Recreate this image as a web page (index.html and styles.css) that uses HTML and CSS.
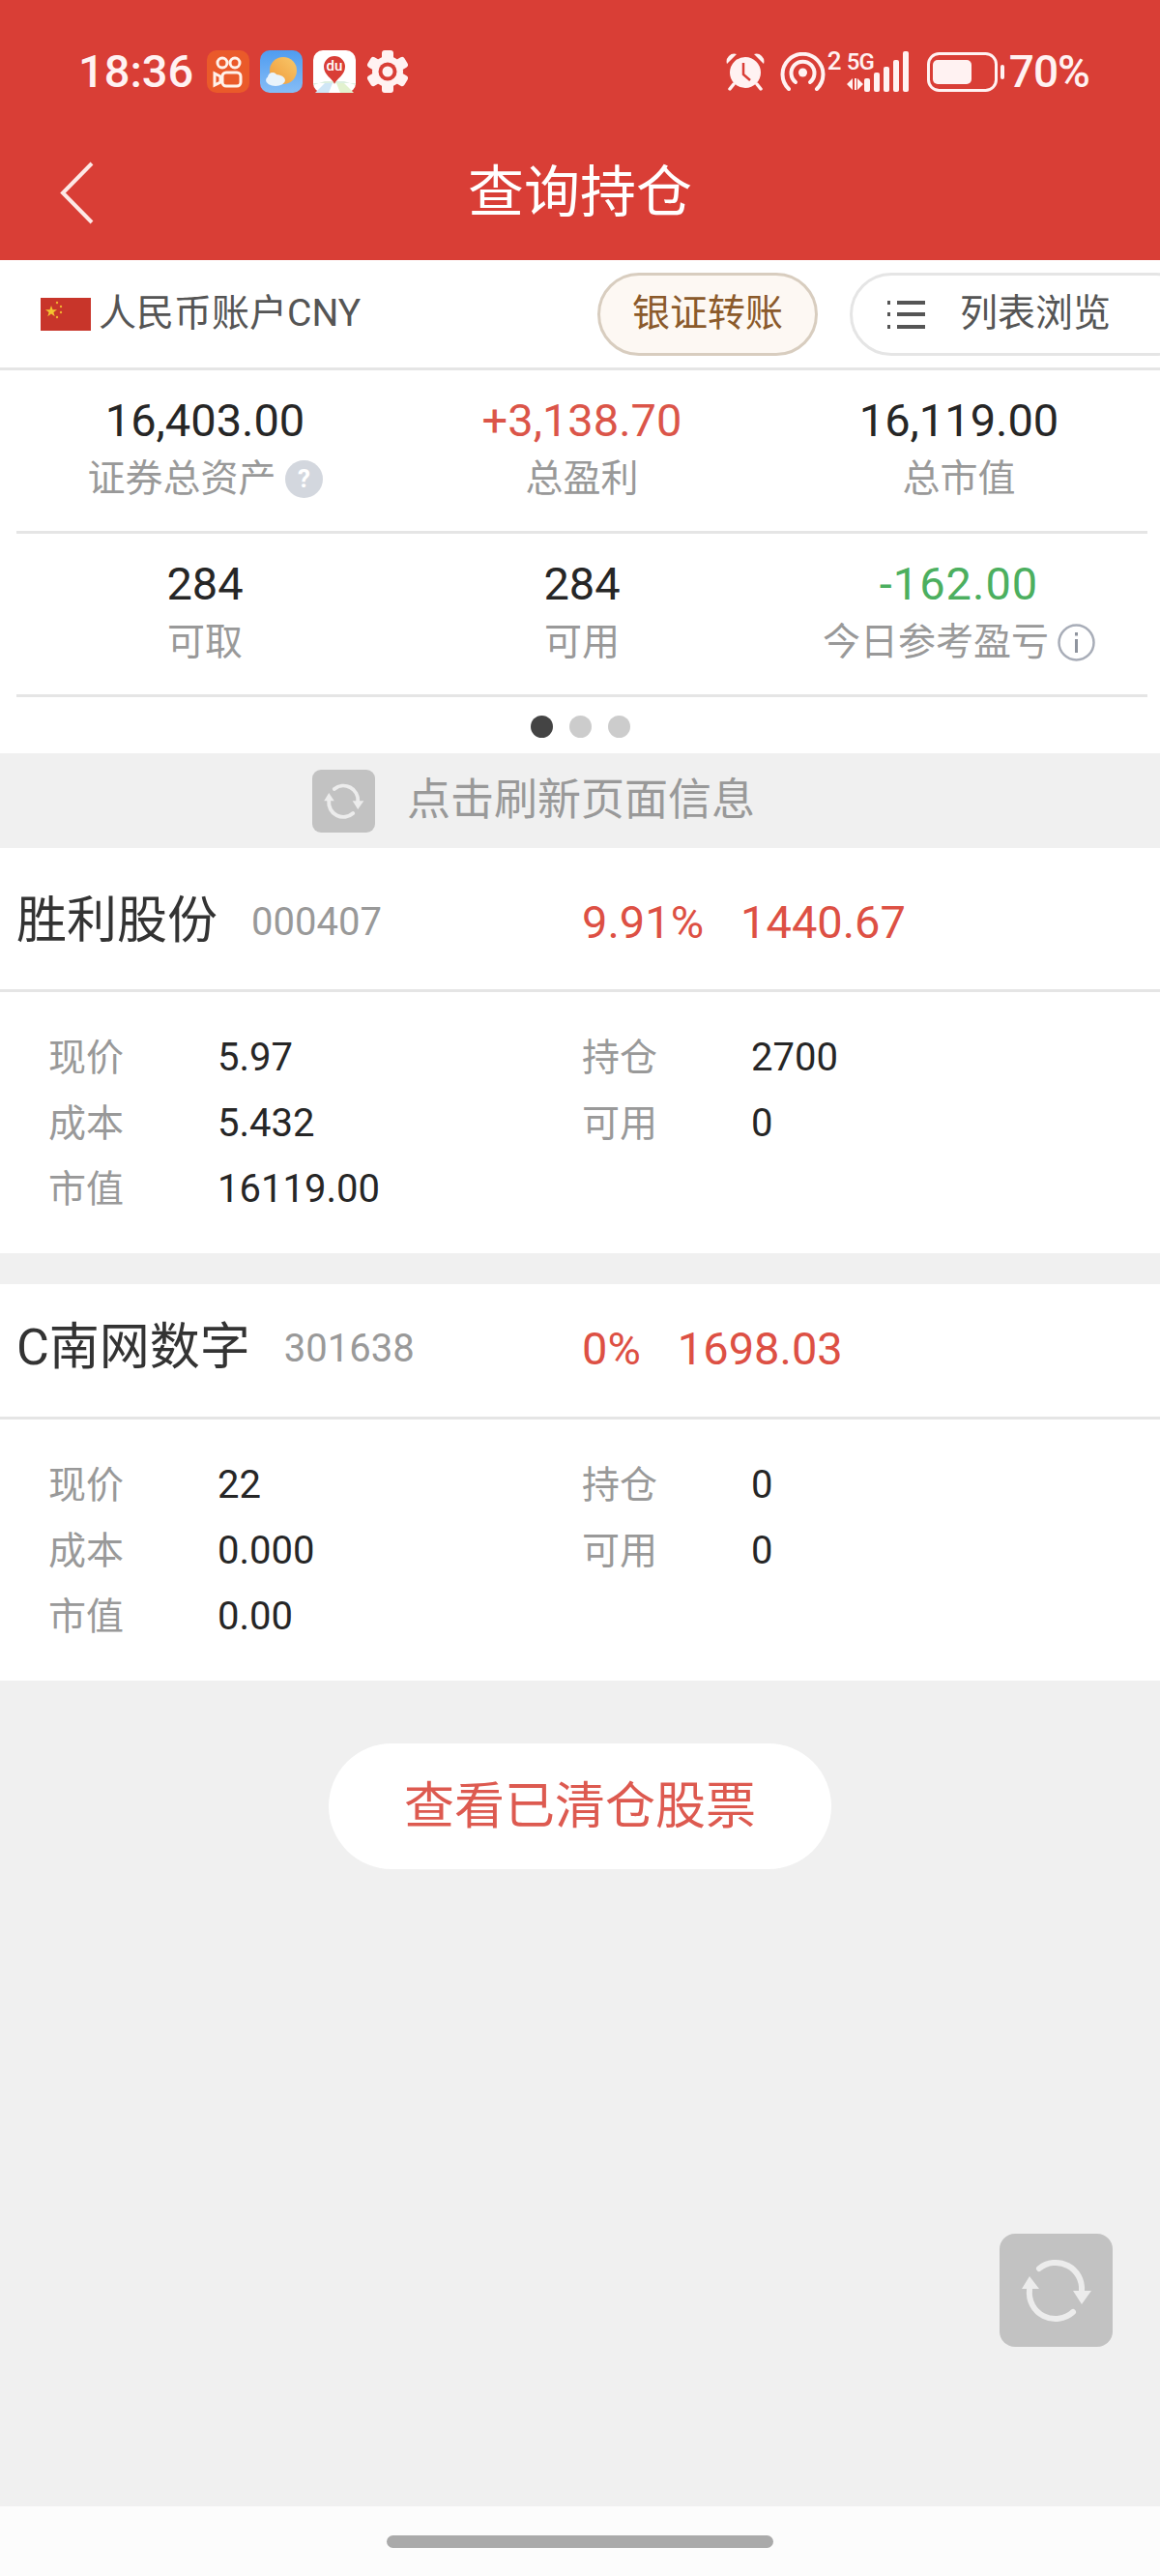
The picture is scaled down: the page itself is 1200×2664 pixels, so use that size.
FILE: index.html
```html
<!DOCTYPE html>
<html lang="zh-CN">
<head>
<meta charset="utf-8">
<title>查询持仓</title>
<link rel="stylesheet" href="styles.css">
</head>
<body>
<div class="page">
  <header class="header">
    <div class="status">
      <span class="time">18:36</span>
      <svg class="app" viewBox="0 0 44 44"><rect width="44" height="44" rx="10" fill="#ea5a2a"/><g fill="none" stroke="#fff2ea" stroke-width="3"><circle cx="16" cy="13" r="5"/><circle cx="29" cy="13" r="5"/><rect x="16" y="23" width="19" height="14" rx="4"/><path d="M14 27l-6-3v12l6-3z"/></g></svg>
      <svg class="app" viewBox="0 0 44 44"><defs><linearGradient id="sky" x1="0" y1="0" x2="0" y2="1"><stop offset="0" stop-color="#4f9cf0"/><stop offset="1" stop-color="#86bdf6"/></linearGradient><linearGradient id="sun" x1="1" y1="0" x2="0" y2="1"><stop offset="0" stop-color="#f8c86a"/><stop offset="1" stop-color="#f09a3a"/></linearGradient></defs><rect width="44" height="44" rx="10" fill="url(#sky)"/><circle cx="24" cy="21" r="14" fill="url(#sun)"/><ellipse cx="16" cy="31" rx="10" ry="6" fill="#e9f3fb"/><circle cx="13" cy="28" r="5" fill="#e9f3fb"/></svg>
      <svg class="app" viewBox="0 0 44 44"><rect width="44" height="44" rx="10" fill="#fff"/><path d="M0 36l12-4h20l12 4v-2H0z" fill="#dcefe0"/><path d="M2 44l10-10h8l-4 10z" fill="#cfe6f6"/><path d="M24 34h8l10 10H28z" fill="#e2f2cf"/><path d="M22 35c-2-6-11-9-11-18a11 11 0 0 1 22 0c0 9-9 12-11 18z" fill="#d93e36"/><text x="22" y="21" class="du">du</text></svg>
      <svg class="app" viewBox="0 0 44 44"><g fill="#fff2f2"><circle cx="22" cy="22" r="16"/><rect x="16" y="0" width="12" height="44" rx="3"/><rect x="16" y="0" width="12" height="44" rx="3" transform="rotate(60 22 22)"/><rect x="16" y="0" width="12" height="44" rx="3" transform="rotate(120 22 22)"/></g><circle cx="22" cy="22" r="9.5" fill="#d93e36"/><circle cx="22" cy="22" r="5.5" fill="#fff2f2"/></svg>
      <div class="status-right">
        <svg class="alarm" viewBox="0 0 40 40"><g fill="#fff2f2"><circle cx="20" cy="21" r="16"/><path d="M1 12a8 8 0 0 1 10-10z"/><path d="M39 12a8 8 0 0 0-10-10z"/></g><path d="M8 33l-4 5M32 33l4 5" stroke="#fff2f2" stroke-width="3.500" stroke-linecap="round"/><path d="M18 11v12l7 6" fill="none" stroke="#d93e36" stroke-width="2.500"/></svg>
        <svg class="hotspot" viewBox="0 0 47 40"><g fill="none" stroke="#fff2f2" stroke-width="4" stroke-linecap="round"><path d="M9 38a21 21 0 1 1 29 0"/><path d="M16 31a12 12 0 1 1 15 0"/></g><circle cx="23.500" cy="21" r="4.500" fill="#fff2f2"/></svg>
        <span class="sim">2</span>
        <div class="net">
          <span class="fiveg">5G</span>
          <svg class="arrows" viewBox="0 0 18 14"><path d="M0 7l6-6v12zM8 1h2v12H8zM11 1l6 6-6 6z" fill="#fff2f2"/></svg>
        </div>
        <svg class="bars" viewBox="0 0 48 42"><g fill="#fff2f2"><rect x="0" y="28" width="6" height="14" rx="2"/><rect x="10" y="22" width="6" height="20" rx="2"/><rect x="20" y="16" width="6" height="26" rx="2"/><rect x="30" y="9" width="6" height="33" rx="2"/><rect x="40" y="0" width="6" height="42" rx="2"/></g></svg>
        <svg class="battery" viewBox="0 0 80 41"><rect x="1.500" y="1.500" width="70" height="38" rx="11" fill="none" stroke="#fff2f2" stroke-width="3"/><rect x="6" y="8" width="40" height="25" rx="5" fill="#fff2f2"/><rect x="76" y="13" width="4" height="15" rx="2" fill="#fff2f2"/></svg>
        <span class="pct">70%</span>
      </div>
    </div>
    <div class="titlebar">
      <svg class="back" viewBox="0 0 35 65"><path d="M33 2L3 32.500 33 63" fill="none" stroke="#fde8e6" stroke-width="4"/></svg>
      <h1 class="title">查询持仓</h1>
    </div>
  </header>

  <div class="toolbar">
    <div class="account">
      <svg class="flag" viewBox="0 0 52 34"><rect width="52" height="34" fill="#c8352a"/><path d="M11 8l1.500 4.200 4.500 0-3.600 2.700 1.300 4.300-3.700-2.600-3.700 2.600 1.300-4.300-3.600-2.700 4.500 0z" fill="#f4c430"/><g fill="#f0b030"><circle cx="17" cy="5" r="1.200"/><circle cx="21" cy="9" r="1.200"/><circle cx="21" cy="15" r="1.200"/><circle cx="17" cy="20" r="1.200"/></g></svg>
      <span class="account-name">人民币账户CNY</span>
    </div>
    <button class="pill pill-bank">银证转账</button>
    <button class="pill pill-list">
      <svg class="list-icon" viewBox="0 0 39 30"><g fill="#555"><rect x="0" y="1" width="3" height="4"/><rect x="0" y="13" width="3" height="4"/><rect x="0" y="26" width="3" height="4"/><rect x="10" y="1" width="29" height="4"/><rect x="10" y="13" width="29" height="4"/><rect x="10" y="26" width="29" height="4"/></g></svg>
      <span>列表浏览</span>
    </button>
  </div>

  <section class="summary">
    <div class="stats">
      <div class="stat"><div class="val">16,403.00</div><div class="lab">证券总资产<svg class="hint" viewBox="0 0 39 39"><circle cx="19.500" cy="19.500" r="19.500" fill="#d3d7de"/><text x="19.500" y="28" class="hint-q">?</text></svg></div></div>
      <div class="stat"><div class="val up">+3,138.70</div><div class="lab">总盈利</div></div>
      <div class="stat"><div class="val">16,119.00</div><div class="lab">总市值</div></div>
    </div>
    <div class="stats">
      <div class="stat"><div class="val">284</div><div class="lab">可取</div></div>
      <div class="stat"><div class="val">284</div><div class="lab">可用</div></div>
      <div class="stat"><div class="val down">-162.00</div><div class="lab">今日参考盈亏<svg class="hint" viewBox="0 0 39 39"><circle cx="19.500" cy="19.500" r="18" fill="none" stroke="#a8adb8" stroke-width="2.500"/><rect x="18" y="16" width="3" height="14" fill="#8f949e"/><rect x="18" y="9" width="3" height="3.500" fill="#8f949e"/></svg></div></div>
    </div>
    <div class="dots"><i class="dot on"></i><i class="dot"></i><i class="dot"></i></div>
  </section>

  <div class="refresh-band">
    <span class="refresh-box small">
      <svg viewBox="0 0 117 117"><g fill="none" stroke="#ececec" stroke-width="7" stroke-linecap="round"><path d="M41 36A27 27 0 0 1 85 59"/><path d="M76 81A27 27 0 0 1 31 58"/></g><path d="M75 58h21l-11 16zM22 58h19L31 43z" fill="#ececec"/></svg>
    </span>
    <span class="refresh-text">点击刷新页面信息</span>
  </div>

  <article class="card">
    <div class="card-head first">
      <div class="name-wrap"><span class="name">胜利股份</span><span class="code">000407</span></div>
      <div class="gain"><span>9.91%</span><span>1440.67</span></div>
    </div>
    <div class="card-body">
      <div class="cell"><span class="k">现价</span><span class="v">5.97</span></div>
      <div class="cell"><span class="k">持仓</span><span class="v">2700</span></div>
      <div class="cell"><span class="k">成本</span><span class="v">5.432</span></div>
      <div class="cell"><span class="k">可用</span><span class="v">0</span></div>
      <div class="cell"><span class="k">市值</span><span class="v">16119.00</span></div>
    </div>
  </article>

  <article class="card second">
    <div class="card-head">
      <div class="name-wrap"><span class="name">C南网数字</span><span class="code">301638</span></div>
      <div class="gain"><span>0%</span><span>1698.03</span></div>
    </div>
    <div class="card-body">
      <div class="cell"><span class="k">现价</span><span class="v">22</span></div>
      <div class="cell"><span class="k">持仓</span><span class="v">0</span></div>
      <div class="cell"><span class="k">成本</span><span class="v">0.000</span></div>
      <div class="cell"><span class="k">可用</span><span class="v">0</span></div>
      <div class="cell"><span class="k">市值</span><span class="v">0.00</span></div>
    </div>
  </article>

  <main class="rest">
    <button class="cleared">查看已清仓股票</button>
    <span class="refresh-box float">
      <svg viewBox="0 0 117 117"><g fill="none" stroke="#ececec" stroke-width="6" stroke-linecap="round"><path d="M41 36A27 27 0 0 1 85 59"/><path d="M76 81A27 27 0 0 1 31 58"/></g><path d="M76 59h19l-10 14zM23 57h18l-10-13z" fill="#ececec"/></svg>
    </span>
  </main>

  <footer class="navbar"><i class="handle"></i></footer>
</div>
</body>
</html>
```
FILE: styles.css
```css
* { box-sizing: border-box; }
html, body { margin: 0; padding: 0; }
body {
  font-family: Roboto, "Noto Sans CJK SC", sans-serif;
  background: #f0f0f0;
}
.page {
  position: relative;
  width: 1200px;
  height: 2664px;
  overflow: hidden;
  display: flex;
  flex-direction: column;
}

/* header */
.header { height: 269px; padding-top: 52px; background: #d93e36; color: #fff2f2; flex: none; }
.status {
  display: flex;
  align-items: center;
  height: 44px;
  padding: 0 73px 0 81px;
}
.time { font-size: 47px; font-weight: 500; line-height: 44px; width: 133px; flex: none; }
.app { width: 44px; height: 44px; margin-right: 11px; flex: none; }
.du { font: 500 15px Roboto, sans-serif; fill: #fff; text-anchor: middle; }
.status-right { margin-left: auto; display: flex; align-items: center; height: 44px; }
.alarm { width: 40px; height: 40px; margin-right: 16px; }
.hotspot { width: 47px; height: 40px; margin-right: 2px; }
.sim { font-size: 26px; font-weight: 500; line-height: 22px; width: 20px; align-self: flex-start; }
.net { width: 27px; display: flex; flex-direction: column; height: 42px; }
.fiveg { font-size: 24px; font-weight: 500; line-height: 22px; letter-spacing: -1px; white-space: nowrap; }
.arrows { width: 18px; height: 14px; margin-top: 5px; }
.bars { width: 48px; height: 42px; margin-right: 17px; margin-left: -9px; }
.battery { width: 80px; height: 41px; margin-right: 5px; }
.pct { font-size: 46px; font-weight: 500; line-height: 44px; letter-spacing: -1px; }

.titlebar {
  display: grid;
  grid-template-columns: 1fr auto 1fr;
  align-items: center;
  height: 136px;
  margin-top: 35px;
  padding: 0 62px;
}
.back { width: 35px; height: 65px; }
.title { margin: 0; font-size: 58px; font-weight: 400; color: #fff; line-height: 70px; }

/* toolbar */
.toolbar {
  flex: none;
  display: flex;
  align-items: center;
  height: 114px;
  background: #fff;
  border-bottom: 3px solid #e5e5e5;
  padding-left: 42px;
}
.account { flex: 0 0 576px; display: flex; align-items: center; gap: 8px; }
.flag { width: 52px; height: 34px; }
.account-name { font-size: 39px; color: #555; line-height: 46px; margin-bottom: 2px; }
.pill {
  flex: none;
  height: 86px;
  border-radius: 43px;
  font-family: inherit;
  font-size: 39px;
  padding: 0 0 10px;
  display: flex;
  align-items: center;
  justify-content: center;
}
.pill-bank {
  width: 228px;
  background: #fdf8f3;
  border: 3px solid #d8cdbf;
  color: #8b5a2b;
}
.pill-list {
  width: 360px;
  margin-left: 33px;
  background: #fff;
  border: 3px solid #e5e5e5;
  color: #555;
  justify-content: flex-start;
  padding-left: 36px;
}
.list-icon { width: 39px; height: 30px; margin-right: 36px; margin-top: 10px; }

/* summary */
.summary { flex: none; background: #fff; }
.stats {
  display: grid;
  grid-template-columns: repeat(3, 390px);
  height: 169px;
  margin: 0 13px 0 17px;
  border-bottom: 3px solid #e5e5e5;
}
.stat { display: flex; flex-direction: column; align-items: center; padding-top: 22px; }
.val { font-size: 47px; line-height: 60px; color: #262626; }
.val.up { color: #db5549; }
.val.down { color: #4caf5f; letter-spacing: 1px; }
.lab { font-size: 39px; line-height: 60px; color: #999; display: flex; align-items: center; }
.hint { width: 39px; height: 39px; margin-left: 9px; }
.hint-q { font: 700 26px Roboto, sans-serif; fill: #fff; text-anchor: middle; }
.dots { display: flex; justify-content: center; align-items: center; gap: 17px; height: 58px; padding-top: 2px; }
.dot { width: 23px; height: 23px; border-radius: 50%; background: #ccc; }
.dot.on { background: #444; }

/* refresh */
.refresh-band {
  flex: none;
  display: flex;
  align-items: center;
  height: 98px;
  gap: 33px;
  padding-left: 323px;
}
.refresh-box { display: block; background: #c2c2c2; }
.refresh-box svg { display: block; width: 100%; height: 100%; }
.refresh-box.small { width: 65px; height: 65px; border-radius: 9px; }
.refresh-text { font-size: 45px; color: #999; line-height: 60px; }

/* cards */
.card { flex: none; background: #fff; }
.card.second { margin-top: 32px; }
.card-head {
  display: grid;
  grid-template-columns: 602px 1fr;
  align-items: center;
  height: 140px;
  padding-bottom: 5px;
  border-bottom: 3px solid #e5e5e5;
}
.card-head.first { height: 149px; padding: 6px 0 0; }
.name-wrap { display: flex; align-items: center; padding-left: 17px; }
.name { font-size: 52px; color: #333; line-height: 70px; }
.code { font-size: 40px; color: #999; margin-left: 35px; }
.gain { display: flex; gap: 38px; font-size: 47px; color: #dd5044; }
.card-body {
  display: grid;
  grid-template-columns: 552px 1fr;
  grid-auto-rows: 68px;
  height: 270px;
  padding: 33px 0 0 50px;
}
.cell { display: flex; align-items: center; }
.k { font-size: 39px; color: #999; width: 175px; flex: none; margin-bottom: 7px; }
.v { font-size: 40px; color: #262626; }

/* rest */
.rest { flex: 1; display: flex; flex-direction: column; align-items: center; }
.cleared {
  width: 520px;
  height: 130px;
  margin-top: 65px;
  border: 0;
  border-radius: 65px;
  background: #fff;
  color: #dd5a50;
  font-family: inherit;
  font-size: 52px;
  padding: 0 0 10px;
}
.refresh-box.float {
  position: absolute;
  left: 1034px;
  top: 2310px;
  width: 117px;
  height: 117px;
  border-radius: 16px;
}

/* nav */
.navbar { flex: none; height: 72px; background: #fcfcfc; display: flex; justify-content: center; align-items: center; }
.handle { width: 400px; height: 13px; border-radius: 7px; background: #aaa; }
```
